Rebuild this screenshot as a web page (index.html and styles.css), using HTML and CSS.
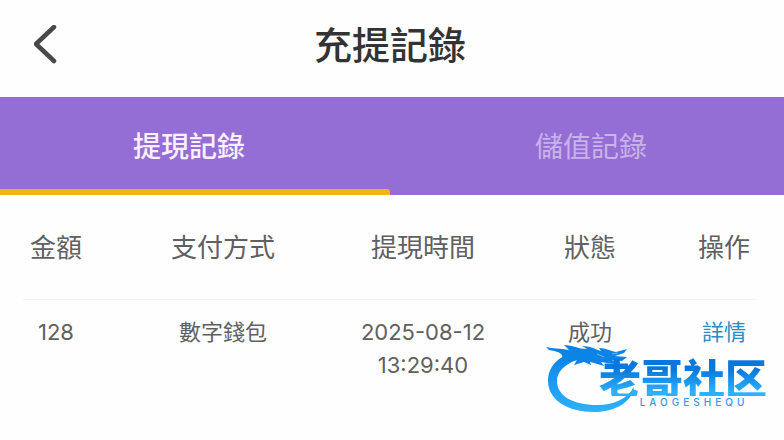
FILE: index.html
```html
<!DOCTYPE html>
<html lang="zh-Hant">
<head>
    <meta charset="UTF-8">
    <meta name="viewport" content="width=device-width, initial-scale=1.0">
    <title>充提記錄</title>
    <link rel="stylesheet" href="styles.css">
</head>
<body>
    <header class="header">
        <button class="back-button" aria-label="返回">
            <svg width="24" height="40" viewBox="0 0 24 40" fill="none" stroke="#484848" stroke-width="4.500" stroke-linecap="round" stroke-linejoin="round">
                <path d="M20 2L2 19L20 36"/>
            </svg>
        </button>
        <h1 class="title">充提記錄</h1>
    </header>

    <nav class="tabs">
        <button class="tab active">提現記錄</button>
        <button class="tab">儲值記錄</button>
    </nav>

    <main class="records">
        <table class="record-table">
            <colgroup>
                <col class="col-amount">
                <col>
                <col class="col-time">
                <col class="col-status">
                <col class="col-action">
            </colgroup>
            <thead>
                <tr>
                    <th>金額</th>
                    <th>支付方式</th>
                    <th>提現時間</th>
                    <th>狀態</th>
                    <th>操作</th>
                </tr>
            </thead>
            <tbody>
                <tr>
                    <td>128</td>
                    <td>數字錢包</td>
                    <td>2025-08-12<br>13:29:40</td>
                    <td>成功</td>
                    <td><a href="#">詳情</a></td>
                </tr>
            </tbody>
        </table>

        <div class="watermark" lang="zh-Hans">
            <svg class="dragon" width="94" height="70" viewBox="0 0 94 70">
                <defs>
                    <linearGradient id="blue" x1="0" y1="0" x2="0" y2="1">
                        <stop offset="0" stop-color="#0a80e4"/>
                        <stop offset="1" stop-color="#2cb2fc"/>
                    </linearGradient>
                </defs>
                <!-- tail ring -->
                <path fill="url(#blue)" d="M36 7C16 9 2 20 2 37C2 56 22 68 48 68C69 68 86 58 88 43C81 55 68 61 51 61C27 61 11 52 11 37C11 27 21 18 35 15Z"/>
                <!-- head, horns and whiskers -->
                <path fill="#0c84e6" d="M0 3C7 5 14 4 23 6L18 1C27 1 32 5 41 5L36 2C44 2 49 5 55 7L53 4C60 4 64 7 70 8L81 5L78 9L69 12L81 13L76 17L66 16L72 20L61 19L55 18L58 22L48 19L44 18L45 21L38 18L28 21L31 16L22 17L26 12L16 14C18 9 10 7 3 6Z"/>
                <path fill="none" stroke="#fff" stroke-opacity=".4" d="M51 10L58 13M66 10L72 9"/>
            </svg>
            <div class="brand">
                <div class="brand-name">老哥社区</div>
                <div class="brand-latin">LAOGESHEQU</div>
            </div>
        </div>
    </main>
</body>
</html>
```
FILE: styles.css
```css
* {
    box-sizing: border-box;
}

body {
    margin: 0;
    min-height: 100vh;
    background-color: #fefefe;
    color: #606060;
    font-family: Inter, "Noto Sans CJK TC", sans-serif;
}

button {
    border: none;
    background: none;
    padding: 0;
    font-family: inherit;
    cursor: pointer;
}

/* Header */
.header {
    display: grid;
    grid-template-columns: 60px 1fr 60px;
    align-items: center;
    height: 97px;
    padding: 0 4px 8px 0;
}

.back-button {
    display: flex;
    justify-content: flex-end;
    padding-right: 2px;
}

.title {
    margin: 0;
    color: #333333;
    font-size: 38px;
    font-weight: 500;
    line-height: 56px;
    text-align: center;
}

/* Tabs */
.tabs {
    display: flex;
    padding-right: 4px;
    background-color: #956ed5;
}

.tab {
    position: relative;
    width: 50%;
    height: 98px;
    padding: 2px 0 0 12px;
    color: #c9b3ea;
    font-size: 28px;
    line-height: 40px;
}

.tab.active {
    padding: 2px 12px 0 0;
    color: #fbf0ff;
    font-weight: 500;
}

.tab.active::after {
    content: "";
    position: absolute;
    left: 0;
    right: 0;
    bottom: 0;
    height: 6px;
    border-radius: 0 3px 0 0;
    background-color: #efb312;
}

/* Records */
.records {
    position: relative;
    padding: 0 27px 40px 23px;
}

.record-table {
    width: 100%;
    table-layout: fixed;
    border-collapse: collapse;
    text-align: center;
}

.col-amount,
.col-action {
    width: 66px;
}

.col-time {
    width: 132px;
}

.col-status {
    width: 202px;
}

th {
    height: 104px;
    padding: 0 0 2px;
    border-bottom: 1px solid #f3f3f3;
    font-size: 26px;
    font-weight: 400;
    white-space: nowrap;
}

td {
    padding: 16px 0;
    font-size: 22px;
    line-height: 33px;
    vertical-align: top;
    white-space: nowrap;
}

td a {
    color: #2b8cc4;
    text-decoration: none;
}

/* Watermark */
.watermark {
    position: absolute;
    top: 149px;
    right: 17px;
    width: 221px;
    height: 72px;
}

.dragon {
    display: block;
}

.brand {
    position: absolute;
    top: 14px;
    right: 0;
    text-align: center;
}

.brand-name {
    background: linear-gradient(#0878dc 30%, #2cb2fc 90%);
    background-clip: text;
    -webkit-background-clip: text;
    color: transparent;
    font-family: "Noto Sans CJK SC", sans-serif;
    font-size: 42px;
    font-weight: 900;
    line-height: 38px;
}

.brand-latin {
    padding-left: 22px;
    color: #309ae8;
    font-size: 10px;
    font-weight: 500;
    letter-spacing: 4px;
    line-height: 12px;
}
```
